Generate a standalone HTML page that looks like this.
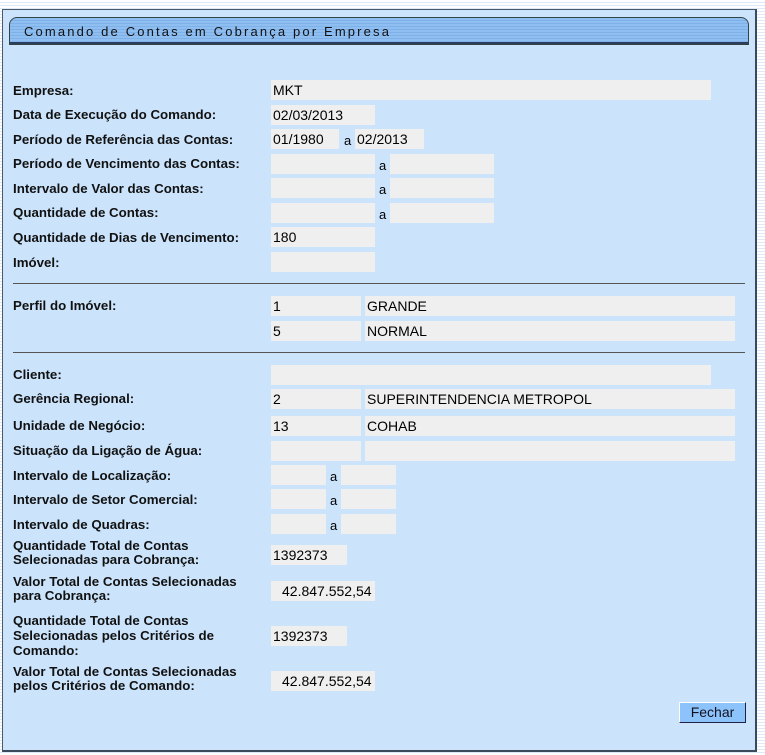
<!DOCTYPE html><html><head><meta charset="utf-8"><style>
body{margin:0;width:765px;height:755px;overflow:hidden;position:relative;font-family:"Liberation Sans",Arial,sans-serif;
background:repeating-linear-gradient(#fff 0 2px,#dde9f7 2px 3px);}
#p{position:absolute;left:2px;top:9px;width:752px;height:740px;background:#cbe4fc;border:1px solid #4a5a6a;border-right:2px solid #3a4a5a;border-bottom:2px solid #3a4a5a}
#h{position:absolute;left:9px;top:17px;width:738px;height:26px;border:1px solid #344;border-radius:8px 8px 0 0;
background:repeating-linear-gradient(#8fbef0 0 2px,#7fb0e8 2px 3px);box-shadow:inset 0 -2px #2c3c5c}
#h span{position:absolute;left:14px;top:6px;font-size:13px;letter-spacing:2.15px;color:#111}
.l{position:absolute;left:13px;font-size:13.3px;font-weight:bold;color:#111;line-height:15px;margin-top:-1px}
.f{position:absolute;background:#efefef;height:20px;font-size:14px;line-height:20px;padding-left:2px;box-sizing:border-box;color:#000}
.a{position:absolute;font-size:13px}
.hr{position:absolute;left:13px;width:732px;height:1px;background:#555}
#b{position:absolute;left:679px;top:702px;width:67px;height:21px;background:#8dc3fb;border:1px solid #fff;border-right-color:#224;border-bottom-color:#224;box-sizing:border-box;font-size:14px;text-align:center;line-height:19px;color:#112}
</style></head><body>
<div id="p"></div>
<div id="h"><span>Comando de Contas em Cobrança por Empresa</span></div>

<div class="l" style="top:84px">Empresa:</div><div class="f" style="left:271px;top:80px;width:440px">MKT</div>
<div class="l" style="top:108px">Data de Execução do Comando:</div><div class="f" style="left:271px;top:105px;width:104px">02/03/2013</div>
<div class="l" style="top:133px">Período de Referência das Contas:</div><div class="f" style="left:271px;top:129px;width:68px">01/1980</div><div class="a" style="left:344px;top:133px">a</div><div class="f" style="left:355px;top:129px;width:69px">02/2013</div>
<div class="l" style="top:157px">Período de Vencimento das Contas:</div><div class="f" style="left:271px;top:154px;width:104px"></div><div class="a" style="left:379px;top:158px">a</div><div class="f" style="left:390px;top:154px;width:104px"></div>
<div class="l" style="top:182px">Intervalo de Valor das Contas:</div><div class="f" style="left:271px;top:178px;width:104px"></div><div class="a" style="left:379px;top:182px">a</div><div class="f" style="left:390px;top:178px;width:104px"></div>
<div class="l" style="top:206px">Quantidade de Contas:</div><div class="f" style="left:271px;top:203px;width:104px"></div><div class="a" style="left:379px;top:207px">a</div><div class="f" style="left:390px;top:203px;width:104px"></div>
<div class="l" style="top:231px">Quantidade de Dias de Vencimento:</div><div class="f" style="left:271px;top:227px;width:104px">180</div>
<div class="l" style="top:256px">Imóvel:</div><div class="f" style="left:271px;top:252px;width:104px"></div>
<div class="hr" style="top:283px"></div>
<div class="l" style="top:299px">Perfil do Imóvel:</div><div class="f" style="left:271px;top:296px;width:90px">1</div><div class="f" style="left:365px;top:296px;width:370px">GRANDE</div>
<div class="f" style="left:271px;top:321px;width:90px">5</div><div class="f" style="left:365px;top:321px;width:370px">NORMAL</div>
<div class="hr" style="top:352px"></div>
<div class="l" style="top:368px">Cliente:</div><div class="f" style="left:271px;top:365px;width:440px"></div>
<div class="l" style="top:392px">Gerência Regional:</div><div class="f" style="left:271px;top:389px;width:90px">2</div><div class="f" style="left:365px;top:389px;width:370px">SUPERINTENDENCIA METROPOL</div>
<div class="l" style="top:419px">Unidade de Negócio:</div><div class="f" style="left:271px;top:416px;width:90px">13</div><div class="f" style="left:365px;top:416px;width:370px">COHAB</div>
<div class="l" style="top:444px">Situação da Ligação de Água:</div><div class="f" style="left:271px;top:441px;width:90px"></div><div class="f" style="left:365px;top:441px;width:370px"></div>
<div class="l" style="top:469px">Intervalo de Localização:</div><div class="f" style="left:271px;top:465px;width:55px"></div><div class="a" style="left:330px;top:469px">a</div><div class="f" style="left:341px;top:465px;width:55px"></div>
<div class="l" style="top:493px">Intervalo de Setor Comercial:</div><div class="f" style="left:271px;top:489px;width:55px"></div><div class="a" style="left:330px;top:493px">a</div><div class="f" style="left:341px;top:489px;width:55px"></div>
<div class="l" style="top:518px">Intervalo de Quadras:</div><div class="f" style="left:271px;top:514px;width:55px"></div><div class="a" style="left:330px;top:518px">a</div><div class="f" style="left:341px;top:514px;width:55px"></div>
<div class="l" style="top:540px;line-height:14px">Quantidade Total de Contas<br>Selecionadas para Cobrança:</div><div class="f" style="left:271px;top:545px;width:76px">1392373</div>
<div class="l" style="top:576px;line-height:14px">Valor Total de Contas Selecionadas<br>para Cobrança:</div><div class="f" style="left:271px;top:581px;width:104px;padding-left:11px">42.847.552,54</div>
<div class="l" style="top:614px;line-height:15px">Quantidade Total de Contas<br>Selecionadas pelos Critérios de<br>Comando:</div><div class="f" style="left:271px;top:626px;width:76px">1392373</div>
<div class="l" style="top:666px;line-height:14px">Valor Total de Contas Selecionadas<br>pelos Critérios de Comando:</div><div class="f" style="left:271px;top:671px;width:104px;padding-left:11px">42.847.552,54</div>
<div id="b">Fechar</div>
</body></html>
